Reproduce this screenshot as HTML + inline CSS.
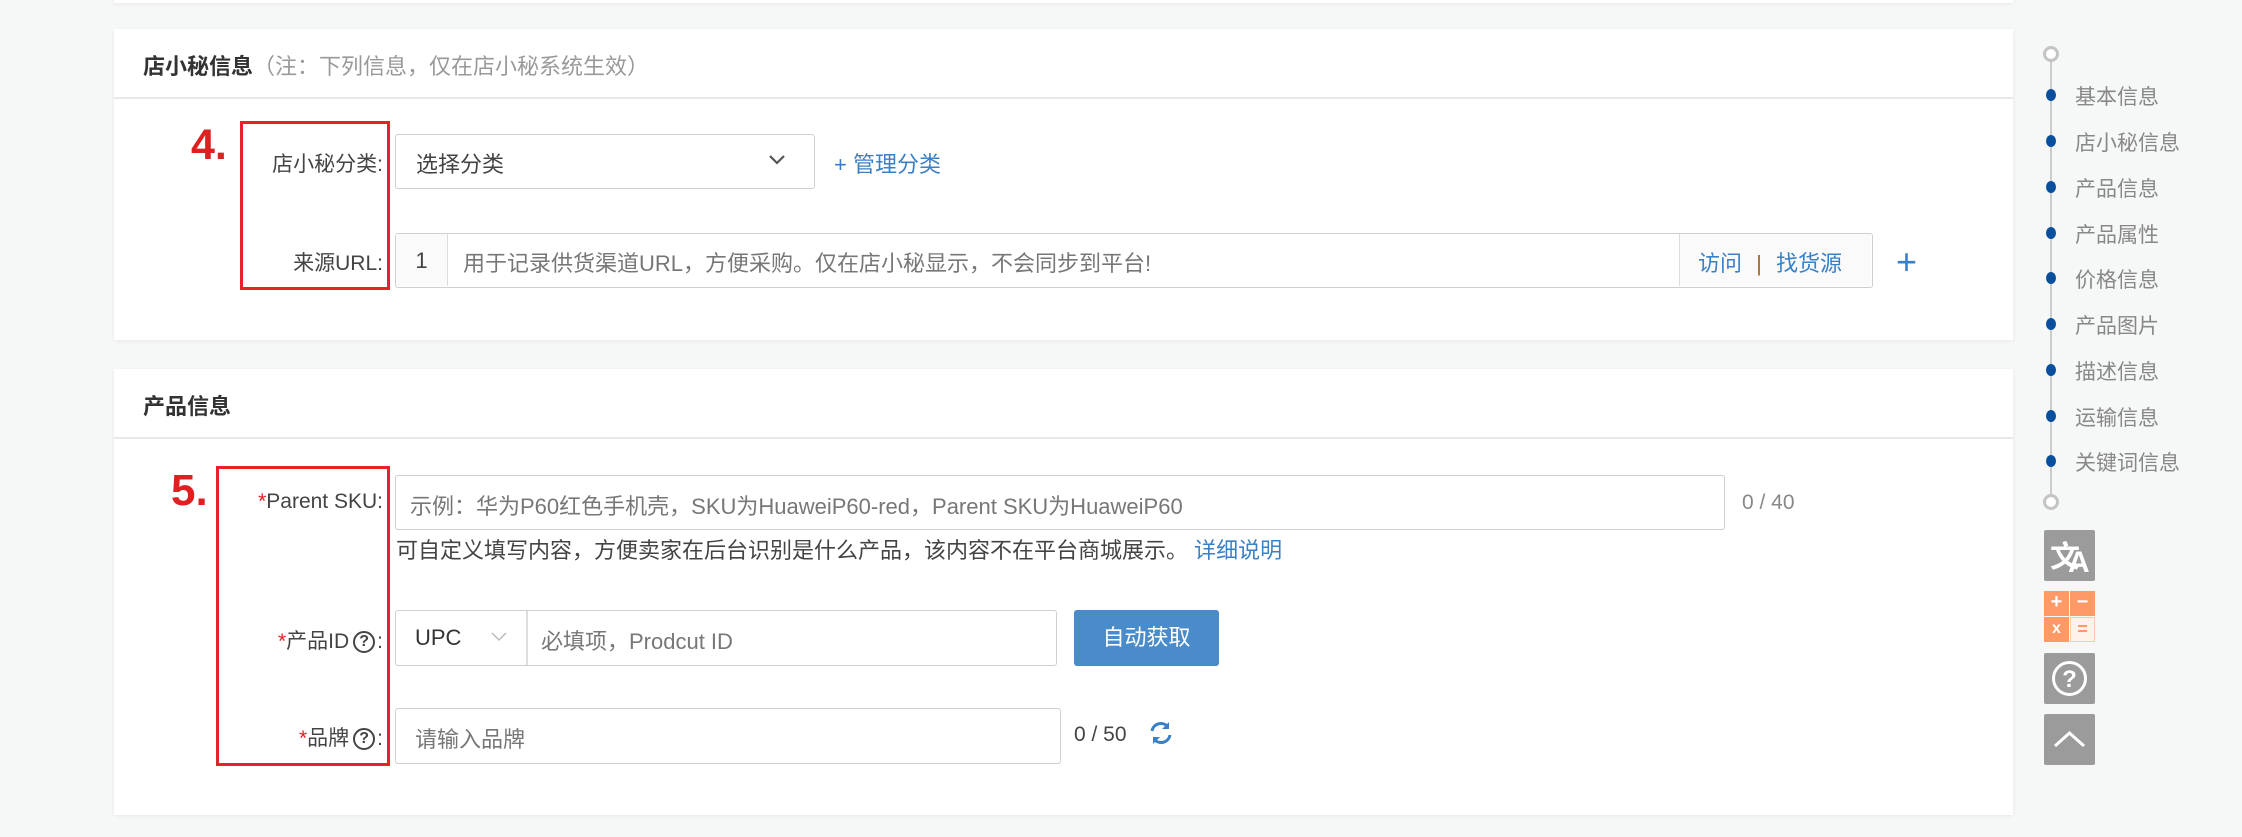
<!DOCTYPE html>
<html><head><meta charset="utf-8"><style>
*{margin:0;padding:0;box-sizing:border-box}
body{width:2242px;height:837px;background:#f6f7f7;position:relative;overflow:hidden;font-family:"Liberation Sans","Noto Sans CJK SC",sans-serif;font-size:22px;color:#444}
.a{position:absolute;white-space:nowrap}
.card{position:absolute;background:#fff;box-shadow:0 1px 4px rgba(0,0,0,.06)}
.hline{position:absolute;left:0;right:0;height:2px;background:#e8e8e8}
.inp{position:absolute;border:1.5px solid #cfcfcf;border-radius:3px;background:#fff}
.lbl{position:absolute;right:calc(2242px - 383px);white-space:nowrap;color:#444;font-size:21px}
.ph{color:#777}
.blue{color:#3a80c7}
.red{color:#e02020}
.q{display:inline-block;width:22px;height:22px;border:2px solid #444;border-radius:50%;font-size:16px;line-height:18px;text-align:center;vertical-align:2px;margin:0 2px 0 4px;font-weight:bold}
.tl{position:absolute;left:2075px;color:#888;font-size:21px}
.dot{position:absolute;left:2046px;width:10px;height:12px;border-radius:50%;background:#0a4f9e}
.ib{position:absolute;left:2044px;width:51px;height:51px;background:#9b9b9b;border-radius:2px}
</style></head><body>
<div class="card" style="left:114px;top:-20px;width:1899px;height:23px"></div>

<div class="card" style="left:114px;top:29px;width:1899px;height:311px">
  <div class="hline" style="top:68px"></div>
</div>
<div class="a" style="left:143px;top:49px;font-size:22px"><b style="color:#333">店小秘信息</b><span style="color:#999">（注：下列信息，仅在店小秘系统生效）</span></div>

<div class="a red" style="left:191px;top:121px;font-size:43px;font-weight:bold">4.</div>
<div class="a" style="left:240px;top:121px;width:150px;height:169px;border:3.5px solid #e8202a"></div>
<div class="lbl" style="top:148px">店小秘分类:</div>
<div class="inp" style="left:395px;top:134px;width:420px;height:55px"></div>
<div class="a" style="left:416px;top:147px;color:#444">选择分类</div>
<svg class="a" style="left:768px;top:154px" width="18" height="12"><path d="M2 2l7 7 7-7" stroke="#555" stroke-width="2.2" fill="none"/></svg>
<div class="a blue" style="left:834px;top:147px">+ 管理分类</div>

<div class="lbl" style="top:247px">来源URL:</div>
<div class="inp" style="left:395px;top:233px;width:1478px;height:55px"></div>
<div class="a" style="left:396px;top:234px;width:52px;height:52px;background:#fafafa;border-right:1.5px solid #ddd;text-align:center;line-height:54px;color:#444">1</div>
<div class="a ph" style="left:463px;top:246px">用于记录供货渠道URL，方便采购。仅在店小秘显示，不会同步到平台!</div>
<div class="a" style="left:1679px;top:234px;width:192px;height:52px;background:#fafafa;border-left:1.5px solid #ddd"></div>
<div class="a blue" style="left:1698px;top:246px">访问 <span style="color:#a06a2a;margin:0 8px">|</span> 找货源</div>
<div class="a blue" style="left:1896px;top:240px;font-size:36px;line-height:44px">+</div>

<div class="card" style="left:114px;top:369px;width:1899px;height:446px">
  <div class="hline" style="top:68px"></div>
</div>
<div class="a" style="left:143px;top:389px;font-weight:bold;color:#333">产品信息</div>

<div class="a red" style="left:171px;top:466px;font-size:44px;font-weight:bold">5.</div>
<div class="a" style="left:216px;top:466px;width:174px;height:300px;border:3.5px solid #e8202a"></div>

<div class="lbl" style="top:490px"><span class="red">*</span>Parent SKU:</div>
<div class="inp" style="left:395px;top:475px;width:1330px;height:55px"></div>
<div class="a ph" style="left:410px;top:489px">示例：华为P60红色手机壳，SKU为HuaweiP60-red，Parent SKU为HuaweiP60</div>
<div class="a" style="left:1742px;top:491px;color:#888;font-size:21px">0 / 40</div>
<div class="a" style="left:396px;top:533px;color:#444">可自定义填写内容，方便卖家在后台识别是什么产品，该内容不在平台商城展示。 <span class="blue">详细说明</span></div>

<div class="lbl" style="top:625px"><span class="red">*</span>产品ID<span class="q">?</span>:</div>
<div class="inp" style="left:395px;top:610px;width:662px;height:56px"></div>
<div class="a" style="left:526px;top:611px;width:1.5px;height:54px;background:#ddd"></div>
<div class="a" style="left:415px;top:625px;color:#333">UPC</div>
<svg class="a" style="left:491px;top:632px" width="16" height="10"><path d="M1 1l7 7 7-7" stroke="#bbb" stroke-width="1.5" fill="none"/></svg>
<div class="a ph" style="left:541px;top:624px">必填项，Prodcut ID</div>
<div class="a" style="left:1074px;top:610px;width:145px;height:56px;background:#4a8bc9;border-radius:3px;color:#fff;text-align:center;line-height:56px">自动获取</div>

<div class="lbl" style="top:722px"><span class="red">*</span>品牌<span class="q">?</span>:</div>
<div class="inp" style="left:395px;top:708px;width:666px;height:56px"></div>
<div class="a ph" style="left:415px;top:722px">请输入品牌</div>
<div class="a" style="left:1074px;top:723px;color:#444;font-size:21px">0 / 50</div>
<svg class="a" style="left:1148px;top:720px" width="26" height="26" viewBox="0 0 26 26"><path d="M4 11a9 9 0 0 1 16-4M22 15a9 9 0 0 1-16 4" stroke="#3a80c7" stroke-width="3" fill="none"/><path d="M21 2v7h-7zM5 24v-7h7z" fill="#3a80c7"/></svg>

<div class="a" style="left:2050px;top:60px;width:1.5px;height:440px;background:#ccc"></div>
<div class="a" style="left:2043px;top:46px;width:16px;height:16px;border:3px solid #c4c4c4;border-radius:50%;background:#fff"></div>
<div class="a" style="left:2043px;top:494px;width:16px;height:16px;border:3px solid #c4c4c4;border-radius:50%;background:#fff"></div>
<div class="dot" style="top:89px"></div><div class="tl" style="top:81px">基本信息</div>
<div class="dot" style="top:135px"></div><div class="tl" style="top:127px">店小秘信息</div>
<div class="dot" style="top:181px"></div><div class="tl" style="top:173px">产品信息</div>
<div class="dot" style="top:227px"></div><div class="tl" style="top:219px">产品属性</div>
<div class="dot" style="top:272px"></div><div class="tl" style="top:264px">价格信息</div>
<div class="dot" style="top:318px"></div><div class="tl" style="top:310px">产品图片</div>
<div class="dot" style="top:364px"></div><div class="tl" style="top:356px">描述信息</div>
<div class="dot" style="top:410px"></div><div class="tl" style="top:402px">运输信息</div>
<div class="dot" style="top:455px"></div><div class="tl" style="top:447px">关键词信息</div>

<div class="ib" style="top:530px"><div class="a" style="left:6px;top:2px;color:#fff;font-size:30px;font-weight:bold">文</div><div class="a" style="left:24px;top:16px;color:#fff;font-size:30px;font-weight:bold">A</div></div>
<div class="a" style="left:2044px;top:591px;width:51px;height:51px">
  <div class="a" style="left:0;top:0;width:25px;height:25px;background:#ff9966;color:#fff;text-align:center;font-weight:bold;font-size:20px;line-height:23px">+</div>
  <div class="a" style="left:26px;top:0;width:25px;height:25px;background:#ff9966;color:#fff;text-align:center;font-weight:bold;font-size:20px;line-height:23px">−</div>
  <div class="a" style="left:0;top:26px;width:25px;height:25px;background:#ff9966;color:#fff;text-align:center;font-weight:bold;font-size:16px;line-height:24px">x</div>
  <div class="a" style="left:26px;top:26px;width:25px;height:25px;background:#fff2ea;border:1px solid #ffc9a8;color:#ff9966;text-align:center;font-weight:bold;font-size:18px;line-height:22px">=</div>
</div>
<div class="ib" style="top:653px"><svg width="51" height="51"><circle cx="25.5" cy="25.5" r="16" stroke="#fff" stroke-width="3" fill="none"/><text x="25.5" y="34" text-anchor="middle" fill="#fff" font-size="24" font-family="Liberation Sans" font-weight="bold">?</text></svg></div>
<div class="ib" style="top:714px"><svg width="51" height="51"><path d="M11 32l14.5-13 14.5 13" stroke="#fff" stroke-width="3" fill="none"/></svg></div>
</body></html>
